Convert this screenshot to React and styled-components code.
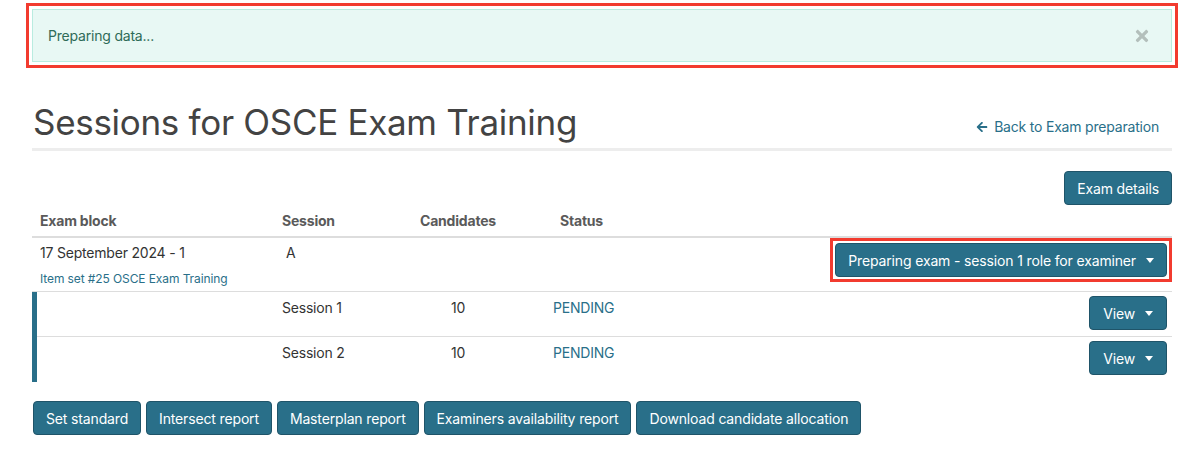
import styled, { createGlobalStyle } from 'styled-components';
import { FaArrowLeft, FaTimes } from 'react-icons/fa';

const GlobalStyle = createGlobalStyle`
  body {
    margin: 0;
    background: #fff;
    font-family: Inter, "Noto Sans", sans-serif;
    font-size: 14px;
    letter-spacing: -0.2px;
    color: #333;
  }
`;

const brand = '#296f89';
const mark = '#f23b2f';

//Component
const App = () => {
  return (
    <Page>
      <GlobalStyle />
      <Alert>
        <span>Preparing data...</span>
        <CloseIcon />
      </Alert>

      <TitleBar>
        <h1>Sessions for OSCE Exam Training</h1>
        <BackLink href='#'>
          <FaArrowLeft size={12} />
          Back to Exam preparation
        </BackLink>
      </TitleBar>

      <Toolbar>
        <Button>Exam details</Button>
      </Toolbar>

      <Row header>
        <Cell>Exam block</Cell>
        <Cell>Session</Cell>
        <Cell center>Candidates</Cell>
        <Cell shift>Status</Cell>
        <Cell />
      </Row>
      <Row tall>
        <Cell>
          17 September 2024 - 1
          <SmallLink href='#'>Item set #25 OSCE Exam Training</SmallLink>
        </Cell>
        <Cell indent>A</Cell>
        <Cell />
        <Cell />
        <ButtonCell flush>
          <Highlight>
            <Button>
              Preparing exam - session 1 role for examiner <Caret />
            </Button>
          </Highlight>
        </ButtonCell>
      </Row>
      <SessionGroup>
        {[1, 2].map((n) => (
          <Row key={n} nested>
            <Cell />
            <Cell>Session {n}</Cell>
            <Cell center>10</Cell>
            <Cell>
              <Status>PENDING</Status>
            </Cell>
            <ButtonCell>
              <Button wide>
                View <Caret />
              </Button>
            </ButtonCell>
          </Row>
        ))}
      </SessionGroup>

      <Actions>
        <Button>Set standard</Button>
        <Button>Intersect report</Button>
        <Button>Masterplan report</Button>
        <Button>Examiners availability report</Button>
        <Button>Download candidate allocation</Button>
      </Actions>
    </Page>
  );
};

const Page = styled.div`
  width: 1140px;
  margin-left: 32px;
  padding-top: 9px;
`;

const Alert = styled.div`
  display: flex;
  align-items: center;
  justify-content: space-between;
  height: 53px;
  box-sizing: border-box;
  padding: 0 21px 0 15px;
  background: #e8f8f4;
  border: 1px solid #b9ece0;
  color: #2f6b58;
  font-size: 14px;
  outline: 3px solid ${mark};
  outline-offset: 3px;
`;

const CloseIcon = styled(FaTimes)`
  color: #b3bfbb;
  width: 16px;
  height: 18px;
`;

const TitleBar = styled.div`
  display: flex;
  align-items: flex-end;
  justify-content: space-between;
  margin-top: 39px;
  padding: 0 13px 5px 1px;
  border-bottom: 3px solid #ededed;
  h1 {
    margin: 0;
    font-size: 35px;
    font-weight: 400;
    color: #434343;
    letter-spacing: -0.3px;
  }
`;

const BackLink = styled.a`
  display: flex;
  align-items: center;
  gap: 6px;
  margin-bottom: 8px;
  color: ${brand};
  text-decoration: none;
  font-size: 14px;
`;

const Toolbar = styled.div`
  display: flex;
  justify-content: flex-end;
  margin-top: 20px;
`;

const Button = styled.button`
  display: inline-flex;
  align-items: center;
  gap: 10px;
  height: 34px;
  padding: 0 ${(p) => (p.wide ? '13px' : '12px')};
  background: ${brand};
  border: 1px solid #1f5469;
  border-radius: 4px;
  color: #fff;
  font-family: inherit;
  font-size: 14px;
  letter-spacing: -0.15px;
  white-space: nowrap;
`;

// red marker box drawn round the active role button
const Highlight = styled.span`
  display: inline-block;
  border: 3px solid ${mark};
  padding: 2px;
  line-height: 0;
`;

const Caret = styled.span`
  width: 0;
  height: 0;
  border-left: 4.5px solid transparent;
  border-right: 4.5px solid transparent;
  border-top: 5px solid #fff;
`;

const SessionGroup = styled.div`
  border-left: 5px solid ${brand};
`;

const Row = styled.div`
  display: grid;
  grid-template-columns: ${(p) => (p.nested ? '237px' : '242px')} 137px 94px 1fr auto;
  align-items: ${(p) => (p.header ? 'center' : 'start')};
  min-height: ${(p) => (p.header ? '33px' : p.tall ? '54px' : '45px')};
  box-sizing: border-box;
  border-bottom: ${(p) => (p.header ? '2px' : '1px')} solid #dddddd;
  color: ${(p) => (p.header ? '#5a5a5a' : '#333')};
  font-weight: ${(p) => (p.header ? 700 : 400)};
  --cell-top: ${(p) => (p.header ? '0px' : p.tall ? '7px' : '8px')};
  &:last-child {
    border-bottom: ${(p) => (p.nested ? 'none' : '')};
  }
`;

const Cell = styled.div`
  padding-top: var(--cell-top);
  padding-left: ${(p) => (p.shift ? '55px' : p.indent ? '12px' : p.center ? '0' : '8px')};
  padding-right: ${(p) => (p.center ? '0' : '8px')};
  text-align: ${(p) => (p.center ? 'center' : 'left')};
  line-height: 16px;
`;

const ButtonCell = styled.div`
  padding: ${(p) => (p.flush ? '0' : '4px 5px 0 0')};
`;

const SmallLink = styled.a`
  display: block;
  margin-top: 10px;
  font-size: 12px;
  letter-spacing: -0.1px;
  color: ${brand};
  text-decoration: none;
`;

const Status = styled.span`
  display: inline-block;
  margin-left: 40px;
  color: ${brand};
`;

const Actions = styled.div`
  display: flex;
  gap: 5px;
  margin-top: 19px;
  padding-left: 1px;
`;

export default App;
